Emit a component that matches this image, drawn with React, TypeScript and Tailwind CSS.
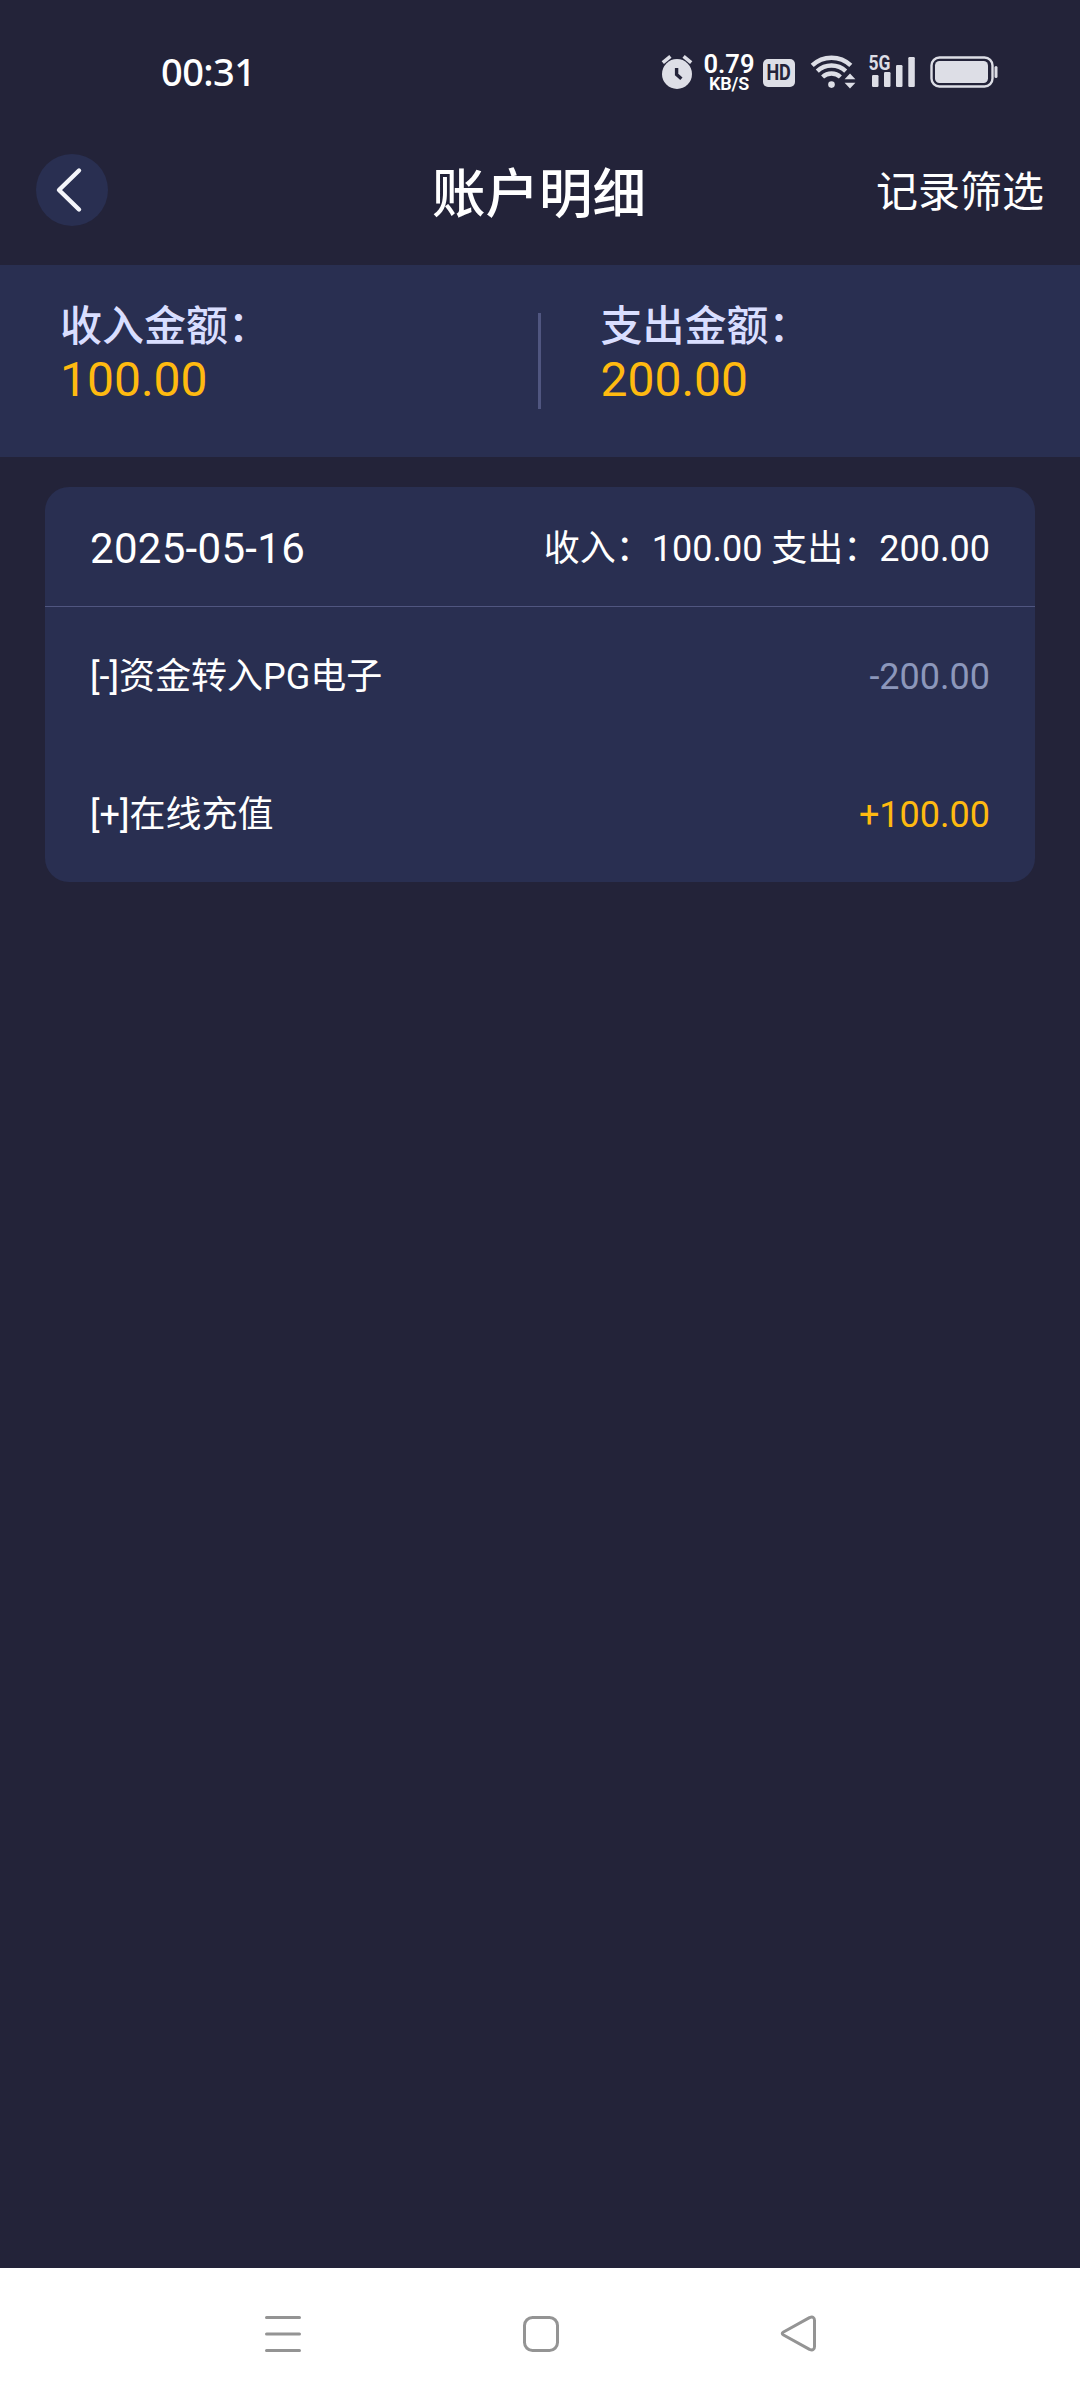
import type { ReactNode } from 'react';

type RecordItem = {
  name: string;
  amount: string;
  income: boolean;
};

const records: RecordItem[] = [
  { name: '[-]资金转入PG电子', amount: '-200.00', income: false },
  { name: '[+]在线充值', amount: '+100.00', income: true },
];

const AlarmIcon = () => (
  <svg width="32" height="36" viewBox="0 0 32 36" fill="none">
    <circle cx="16" cy="20" r="15" fill="#dddee6" />
    <path d="M1.8 8.6L9.4 2.4M30.2 8.6L22.6 2.4" stroke="#dddee6" strokeWidth="3.6" />
    <path d="M15.6 14v6.6l4.8 4.2" stroke="#232339" strokeWidth="3.4" />
  </svg>
);

const WifiIcon = () => (
  <svg width="46" height="36" viewBox="0 0 46 36" fill="none">
    <g stroke="#dddee6" strokeWidth="4.4">
      <path d="M2.2 11.4a28 28 0 0 1 38.6 0" />
      <path d="M7.3 17.2a20.5 20.5 0 0 1 28.4 0" />
      <path d="M12.6 23a13 13 0 0 1 17.8 0" />
    </g>
    <circle cx="21.5" cy="30.6" r="3.3" fill="#dddee6" />
    <path d="M40 19.6l5.4 5.6H34.6zM40 34.4l5.4-5.6H34.6z" fill="#dddee6" />
  </svg>
);

const SignalIcon = () => (
  <svg width="48" height="44" viewBox="0 -8 48 44" fill="#dddee6">
    <text
      x="0.5"
      y="16"
      fontFamily="Roboto, sans-serif"
      fontSize="20.5"
      fontWeight="700"
      textLength="22"
      lengthAdjust="spacingAndGlyphs"
    >
      5G
    </text>
    <rect x="4" y="21" width="6.5" height="12" rx="1.2" />
    <rect x="16" y="18" width="6.5" height="15" rx="1.2" />
    <rect x="28" y="11" width="6.5" height="22" rx="1.2" />
    <rect x="40.3" y="3" width="6.5" height="30" rx="1.2" />
  </svg>
);

const BatteryIcon = () => (
  <svg width="68" height="32" viewBox="0 0 68 32" fill="none">
    <rect x="1.5" y="1.5" width="61" height="29" rx="8" stroke="#dddee6" strokeWidth="2.4" />
    <rect x="5" y="5" width="53" height="22" rx="4.5" fill="#dddee6" />
    <rect x="64.5" y="10" width="3" height="12" rx="1.5" fill="#dddee6" />
  </svg>
);

const StatusBar = () => (
  <div className="flex h-[116px] items-start justify-between pl-[161px] pr-[82px] pt-[54px] font-['Noto_Sans',sans-serif] text-white">
    <span className="-mt-px text-[38px] font-medium leading-[36px] tracking-[-0.6px]">00:31</span>
    <div className="flex items-start">
      <AlarmIcon />
      <div className="ml-[11px] flex w-[50px] flex-col items-center font-['Roboto',sans-serif]">
        <span className="text-[25.5px] font-semibold leading-[20px]">0.79</span>
        <span className="text-[18px] font-semibold leading-[19px] tracking-[-0.2px]">KB/S</span>
      </div>
      <span className="ml-[9px] mt-[5px] flex h-7 w-8 items-center justify-center rounded-[5px] bg-[#dddee6] font-['Roboto',sans-serif] text-[22px] font-bold leading-none tracking-[-0.4px] text-[#232339]">
        <span className="inline-block scale-x-[0.82]">HD</span>
      </span>
      <span className="ml-[15px]">
        <WifiIcon />
      </span>
      <span className="-mt-2 ml-[12px]">
        <SignalIcon />
      </span>
      <span className="ml-[14px] mt-[2px]">
        <BatteryIcon />
      </span>
    </div>
  </div>
);

const Header = () => (
  <header className="grid h-[149px] grid-cols-3 items-center px-9 pb-px">
    <button className="flex size-[72px] items-center justify-center rounded-full bg-[#292f51]">
      <svg width="40" height="48" viewBox="0 0 40 48" fill="none">
        <path d="M27 4.500L7 24l20 19.500" stroke="#f4f5fa" strokeWidth="4.4" strokeLinecap="round" strokeLinejoin="round" />
      </svg>
    </button>
    <h1 className="pr-[2px] pt-[9px] text-center text-[53.5px] font-medium leading-[60px]">账户明细</h1>
    <span className="pt-[6px] text-right text-[42px] leading-[48px]">记录筛选</span>
  </header>
);

const Total = ({ label, value }: { label: string; value: string }) => (
  <div className="flex-1 pl-[60px] pt-[38px]">
    <div className="text-[42px] font-medium leading-[48px] text-[#d9deff]">{label}</div>
    <div className="mt-px text-[48px] leading-[56px] text-[#ffba10]">{value}</div>
  </div>
);

const Row = ({ children }: { children: ReactNode }) => (
  <div className="flex h-[138px] items-center justify-between px-[45px] pt-[2px] text-[36px]">{children}</div>
);

export default function App() {
  return (
    <div className="flex h-[2400px] w-[1080px] flex-col overflow-hidden bg-[#232339] font-['Roboto','Noto_Sans_CJK_SC',sans-serif] text-white">
      <StatusBar />
      <Header />

      <section className="flex h-[192px] bg-[#292f51]">
        <Total label="收入金额：" value="100.00" />
        <div className="-ml-[2px] mt-[48px] h-24 w-[3px] bg-[#505680]" />
        <Total label="支出金额：" value="200.00" />
      </section>

      <main className="flex-1 px-[45px] pt-[30px]">
        <div className="h-[395px] overflow-hidden rounded-[24px] bg-[#292f51]">
          <div className="flex h-[120px] items-center justify-between border-b border-[#505680] px-[45px] pt-[3px]">
            <span className="text-[42px] tracking-[0.3px]">2025-05-16</span>
            <span className="pt-[2px] text-[36px]">收入：100.00 支出：200.00</span>
          </div>
          {records.map((item) => (
            <Row key={item.name}>
              <span>{item.name}</span>
              <span className={item.income ? 'text-[#ffba10]' : 'text-[#8c97bb]'}>{item.amount}</span>
            </Row>
          ))}
        </div>
      </main>

      <nav className="flex h-[132px] items-center justify-between bg-white pl-[264px] pr-[262px]">
        <svg width="38" height="38" viewBox="0 0 38 38" fill="none" stroke="#949494" strokeWidth="3" strokeLinecap="round">
          <path d="M2.5 2.5h33M2.5 19h33M2.5 35.5h33" />
        </svg>
        <svg width="38" height="38" viewBox="0 0 38 38" fill="none" stroke="#949494" strokeWidth="3">
          <rect x="2.5" y="2.5" width="33" height="33" rx="8" />
        </svg>
        <svg width="38" height="38" viewBox="0 0 38 38" fill="none" stroke="#949494" strokeWidth="3" strokeLinejoin="round">
          <path d="M3.500 17L29.500 2.600Q34.500 0.800 34.500 5.500V31.500Q34.500 36.200 29.500 34.400L3.500 20Q1 18.500 3.500 17Z" />
        </svg>
      </nav>
    </div>
  );
}
